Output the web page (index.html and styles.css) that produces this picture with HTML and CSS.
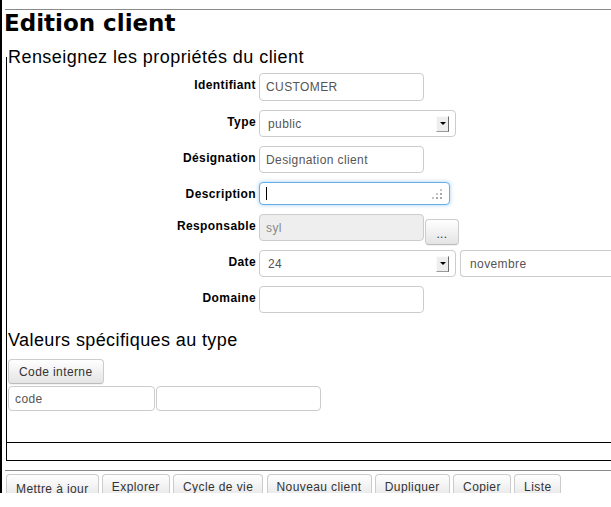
FILE: index.html
```html
<!DOCTYPE html>
<html lang="fr">
<head>
<meta charset="utf-8">
<title>Edition client</title>
<link rel="stylesheet" href="styles.css">
</head>
<body>
<div class="page">
  <hr class="rule">
  <h1 class="title">Edition client</h1>
  <fieldset class="box">
    <legend class="legend">Renseignez les propriétés du client</legend>
    <div class="form">
      <div class="row tall">
        <label class="lbl">Identifiant</label>
        <input class="field" type="text" value="CUSTOMER">
      </div>
      <div class="row">
        <label class="lbl">Type</label>
        <div class="select"><span>public</span><span class="arrow"></span></div>
      </div>
      <div class="row">
        <label class="lbl">Désignation</label>
        <input class="field" type="text" value="Designation client">
      </div>
      <div class="row short">
        <label class="lbl">Description</label>
        <div class="textarea">
          <span class="caret"></span>
          <svg class="grip" width="10" height="10" viewBox="0 0 10 10">
            <rect x="8" y="0" width="2" height="2" fill="#c4c4c4"/>
            <rect x="4" y="4" width="2" height="2" fill="#c4c4c4"/>
            <rect x="8" y="4" width="2" height="2" fill="#a8a8a8"/>
            <rect x="0" y="8" width="2" height="2" fill="#c4c4c4"/>
            <rect x="4" y="8" width="2" height="2" fill="#a8a8a8"/>
            <rect x="8" y="8" width="2" height="2" fill="#a8a8a8"/>
          </svg>
        </div>
      </div>
      <div class="row">
        <label class="lbl">Responsable</label>
        <input class="field disabled" type="text" value="syl" disabled>
        <button class="btn dots" type="button">...</button>
      </div>
      <div class="row">
        <label class="lbl">Date</label>
        <div class="select"><span>24</span><span class="arrow"></span></div>
        <div class="select month"><span>novembre</span></div>
      </div>
      <div class="row">
        <label class="lbl">Domaine</label>
        <input class="field" type="text" value="">
      </div>
    </div>
    <div class="specific">
      <h2 class="sub">Valeurs spécifiques au type</h2>
      <button class="btn code-btn" type="button">Code interne</button>
      <div class="pair">
        <input class="field code" type="text" value="code">
        <input class="field" type="text" value="">
      </div>
    </div>
  </fieldset>
  <hr class="rule bottom-rule">
  <div class="toolbar">
    <button class="btn tb primary" type="button">Mettre à jour</button>
    <button class="btn tb" type="button">Explorer</button>
    <button class="btn tb" type="button">Cycle de vie</button>
    <button class="btn tb" type="button">Nouveau client</button>
    <button class="btn tb" type="button">Dupliquer</button>
    <button class="btn tb" type="button">Copier</button>
    <button class="btn tb" type="button">Liste</button>
  </div>
</div>
</body>
</html>
```

FILE: styles.css
```css
html, body {
  margin: 0;
  padding: 0;
  overflow: hidden;
  background: #fff;
}
body {
  font-family: "Liberation Sans", Arial, sans-serif;
  font-size: 12px;
  color: #000;
}
.page {
  border-left: 2px solid #000;
  height: 493px;
  box-sizing: border-box;
  padding: 9px 0 0 2px;
}
.rule {
  border: 0;
  border-top: 1px solid #8a8a8a;
  height: 0;
  margin: 0 0 0 1px;
}
.title {
  font-family: "DejaVu Sans", sans-serif;
  font-weight: bold;
  font-size: 23px;
  line-height: 25px;
  margin: 0 0 12px 0;
  padding-top: 1px;
  height: 24px;
}
.box {
  margin: 0 0 0 2px;
  padding: 6px 0 17px 0;
  border: 1px solid #000;
  border-top: 0;
  border-right: 0;
  min-width: 0;
}
.legend {
  font-size: 18px;
  line-height: 20px;
  letter-spacing: 0.45px;
  padding: 0 0 0 1px;
}
.row {
  display: flex;
  align-items: flex-start;
  height: 27px;
  margin-bottom: 9px;
}
.row.tall { height: 28px; }
.row.short { height: 23px; }
.row:last-child { margin-bottom: 0; }
.lbl {
  flex: none;
  width: 252px;
  box-sizing: border-box;
  padding: 5px 3px 0 0;
  text-align: right;
  font-weight: bold;
  line-height: 14px;
  letter-spacing: 0.4px;
}
.field {
  flex: none;
  box-sizing: border-box;
  width: 165px;
  height: 100%;
  margin: 0;
  border: 1px solid #ccc;
  border-radius: 4px;
  padding: 0 6px;
  font-family: "Liberation Sans", Arial, sans-serif;
  font-size: 12px;
  letter-spacing: 0.4px;
  color: #555;
  background: #fff;
  outline: none;
}
.field.disabled {
  background: #eee;
  color: #888;
}
.select {
  flex: none;
  box-sizing: border-box;
  width: 197px;
  height: 27px;
  display: flex;
  align-items: center;
  justify-content: space-between;
  border: 1px solid #ccc;
  border-radius: 4px;
  padding: 0 6px 0 8px;
  color: #555;
  letter-spacing: 0.4px;
  background: #fff;
}
.select.month {
  width: 151px;
  margin-left: 4px;
  padding-left: 9px;
  border-right: 0;
  border-radius: 4px 0 0 4px;
}
.arrow {
  box-sizing: border-box;
  width: 13px;
  height: 16px;
  display: flex;
  align-items: center;
  justify-content: center;
  background: #eeeeee;
  border-top: 1px solid #fafafa;
  border-left: 1px solid #fafafa;
  border-right: 1px solid #6a6a6a;
  border-bottom: 1px solid #9a9a9a;
}
.arrow::after {
  content: "";
  border-left: 3px solid transparent;
  border-right: 3px solid transparent;
  border-top: 3px solid #000;
}
.textarea {
  position: relative;
  flex: none;
  box-sizing: border-box;
  width: 191px;
  height: 23px;
  border: 1px solid #66afe9;
  border-radius: 4px;
  box-shadow: 0 0 4px rgba(102, 175, 233, 0.6);
  background: #fff;
}
.caret {
  position: absolute;
  left: 6px;
  top: 4px;
  width: 1px;
  height: 13px;
  background: #000;
}
.grip {
  position: absolute;
  right: 7px;
  bottom: 5px;
}
.btn {
  box-sizing: border-box;
  height: 26px;
  margin: 0;
  padding: 0 9px;
  border: 1px solid #ccc;
  border-bottom-color: #bbb;
  border-radius: 4px;
  background: linear-gradient(#ffffff, #e4e4e4);
  box-shadow: 0 1px 1px rgba(0, 0, 0, 0.06);
  color: #333;
  font-family: "Liberation Sans", Arial, sans-serif;
  font-size: 12px;
  letter-spacing: 0.4px;
  white-space: nowrap;
}
.dots {
  flex: none;
  width: 34px;
  margin: 5px 0 0 1px;
  padding: 4px 0 0 0;
}
.specific {
  margin-top: 17px;
  padding-bottom: 31px;
  border-bottom: 1px solid #000;
}
.sub {
  font-size: 18px;
  font-weight: normal;
  line-height: 21px;
  letter-spacing: 0.4px;
  margin: 0 0 8px 1px;
}
.code-btn {
  display: block;
  height: 25px;
  margin-left: 1px;
  padding: 0 10px;
}
.pair {
  display: flex;
  gap: 1px;
  height: 25px;
  margin: 2px 0 0 1px;
}
.field.code {
  width: 147px;
}
.bottom-rule {
  margin-top: 9px;
}
.toolbar {
  display: flex;
  align-items: flex-start;
  gap: 3.3px;
  margin: 3px 0 0 2px;
}
.tb.primary {
  height: 27px;
  padding-top: 2px;
}
```
